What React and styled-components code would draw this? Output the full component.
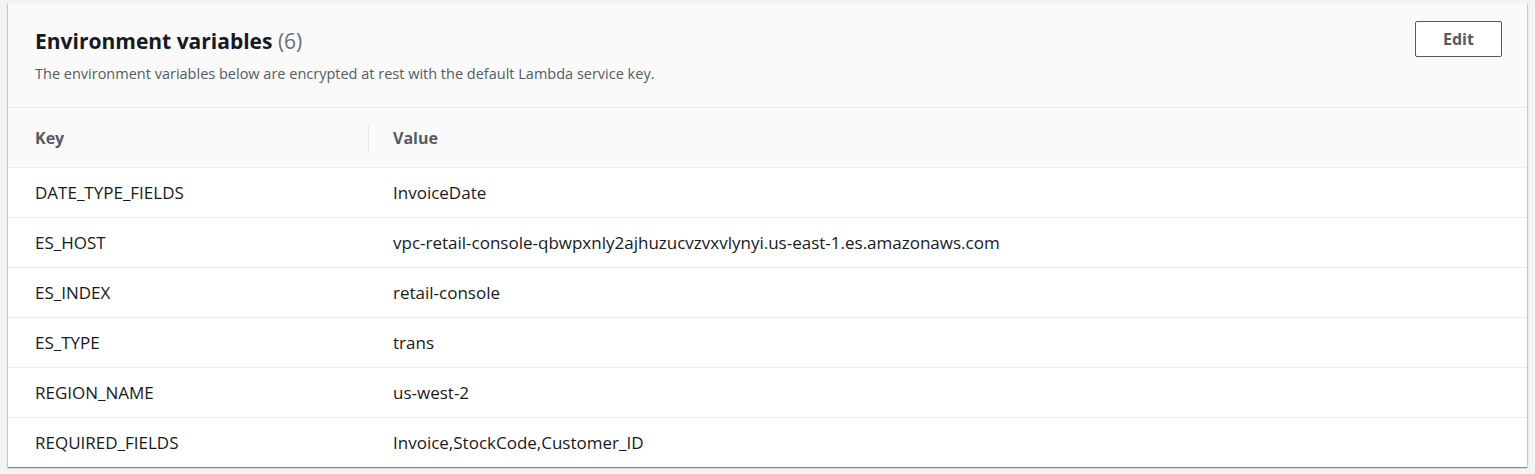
import React from "react";
import styled, { createGlobalStyle } from "styled-components";

const GlobalStyle = createGlobalStyle`
  body {
    margin: 0;
    background: #f2f3f3;
    font-family: "Open Sans", "Liberation Sans", Arial, sans-serif;
    -webkit-font-smoothing: antialiased;
  }
`;

const Page = styled.div`
  padding: 3px 8px 6px 8px;
`;

const Card = styled.div`
  background: #ffffff;
  box-shadow: 0 1px 1px 0 rgba(0, 28, 36, 0.3), 1px 1px 1px 0 rgba(0, 28, 36, 0.15),
    -1px 1px 1px 0 rgba(0, 28, 36, 0.15);
`;

const Header = styled.div`
  display: flex;
  justify-content: space-between;
  align-items: flex-start;
  padding: 18px 25px 20px 27px;
  background: #fafafa;
  border-bottom: 1px solid #eaeded;
`;

const Heading = styled.div`
  display: flex;
  flex-direction: column;
`;

const Title = styled.h2`
  margin: 0;
  font-size: 21px;
  line-height: 40px;
  font-weight: 700;
  color: #16191f;
`;

const Counter = styled.span`
  font-weight: 400;
  color: #687078;
`;

const Description = styled.p`
  margin: 0;
  font-size: 14.5px;
  line-height: 26px;
  color: #545b64;
`;

const Button = styled.button`
  width: 87px;
  height: 36px;
  border: 1px solid #545b64;
  border-radius: 2px;
  background: #ffffff;
  color: #545b64;
  font-family: inherit;
  font-size: 16px;
  font-weight: 700;
  cursor: pointer;
`;

const Row = styled.div`
  display: grid;
  grid-template-columns: 360px 1fr;
  align-items: center;
  height: ${(p) => (p.$head ? 59 : 49)}px;
  background: ${(p) => (p.$head ? "#fafafa" : "#ffffff")};
  border-bottom: ${(p) => (p.$last ? "none" : "1px solid #eaeded")};
`;

const Cell = styled.div`
  position: relative;
  padding-left: ${(p) => (p.$first ? 27 : 25)}px;
  font-size: ${(p) => (p.$head ? 16 : 17)}px;
  font-weight: ${(p) => (p.$head ? 700 : 400)};
  color: ${(p) => (p.$head ? "#545b64" : "#16191f")};
  line-height: 22px;
  white-space: nowrap;
`;

const Divider = styled.span`
  position: absolute;
  left: 0;
  top: -4px;
  bottom: -4px;
  border-left: 1px solid #eaeded;
`;

const variables = [
  ["DATE_TYPE_FIELDS", "InvoiceDate"],
  ["ES_HOST", "vpc-retail-console-qbwpxnly2ajhuzucvzvxvlynyi.us-east-1.es.amazonaws.com"],
  ["ES_INDEX", "retail-console"],
  ["ES_TYPE", "trans"],
  ["REGION_NAME", "us-west-2"],
  ["REQUIRED_FIELDS", "Invoice,StockCode,Customer_ID"],
];

export default function App() {
  return (
    <Page>
      <GlobalStyle />
      <Card>
        <Header>
          <Heading>
            <Title>
              Environment variables <Counter>(6)</Counter>
            </Title>
            <Description>
              The environment variables below are encrypted at rest with the default Lambda service key.
            </Description>
          </Heading>
          <Button>Edit</Button>
        </Header>
        <Row $head>
          <Cell $head $first>Key</Cell>
          <Cell $head>
            <Divider />
            Value
          </Cell>
        </Row>
        {variables.map(([key, value], i) => (
          <Row key={key} $last={i === variables.length - 1}>
            <Cell $first>{key}</Cell>
            <Cell>{value}</Cell>
          </Row>
        ))}
      </Card>
    </Page>
  );
}
